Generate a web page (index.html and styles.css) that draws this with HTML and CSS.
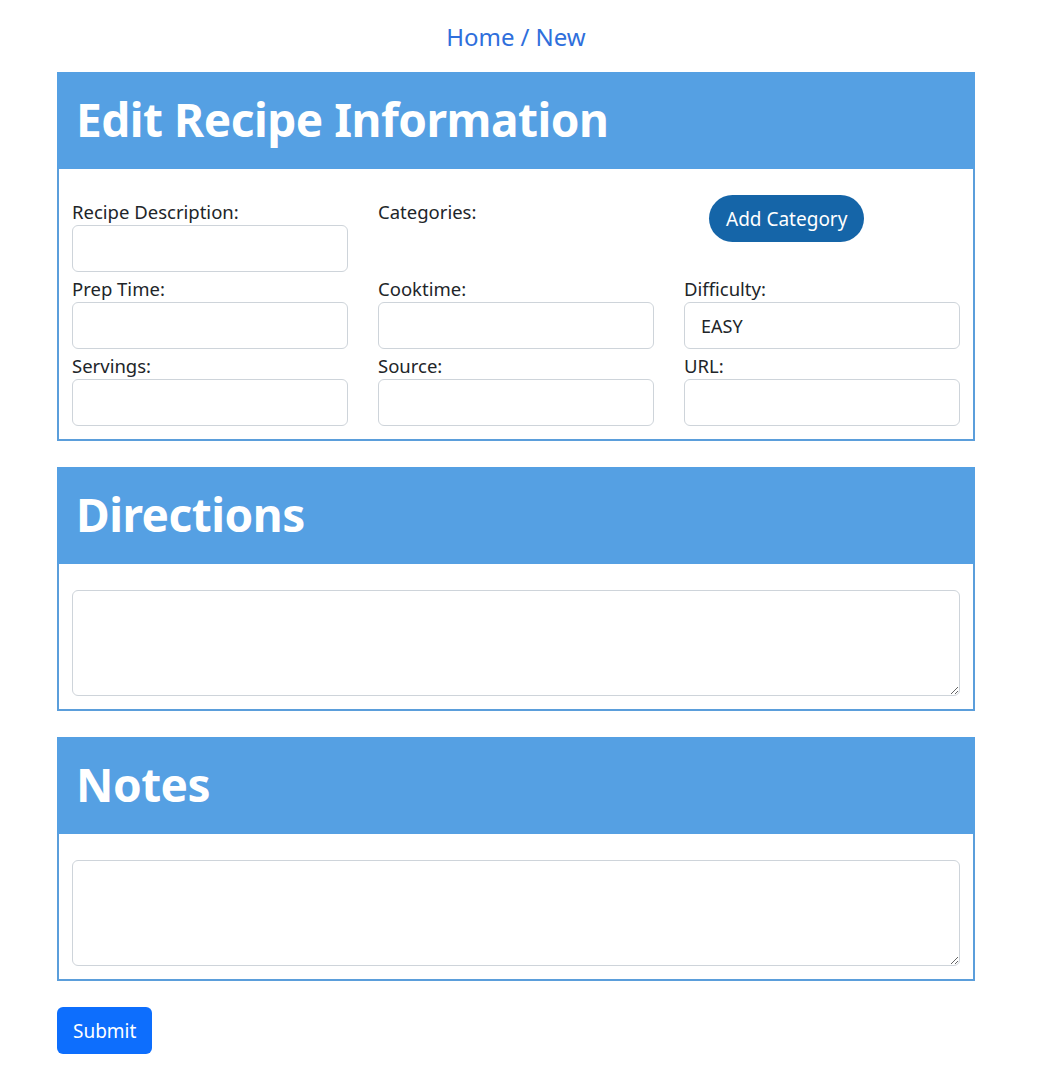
FILE: index.html
```html
<!DOCTYPE html>
<html lang="en">
<head>
<meta charset="utf-8">
<title>Edit Recipe</title>
<link rel="stylesheet" href="styles.css">
</head>
<body>
<div class="page">
  <nav class="crumbs"><a href="#">Home</a> / <a href="#">New</a></nav>

  <section class="card">
    <header class="card-head"><h1>Edit Recipe Information</h1></header>
    <div class="card-body grid">
      <div class="field">
        <label>Recipe Description:</label>
        <input class="box" type="text">
      </div>
      <div class="field">
        <label>Categories:</label>
      </div>
      <div class="field">
        <button class="pill" type="button">Add Category</button>
      </div>

      <div class="field">
        <label>Prep Time:</label>
        <input class="box" type="text">
      </div>
      <div class="field">
        <label>Cooktime:</label>
        <input class="box" type="text">
      </div>
      <div class="field">
        <label>Difficulty:</label>
        <input class="box" type="text" value="EASY">
      </div>

      <div class="field">
        <label>Servings:</label>
        <input class="box" type="text">
      </div>
      <div class="field">
        <label>Source:</label>
        <input class="box" type="text">
      </div>
      <div class="field">
        <label>URL:</label>
        <input class="box" type="text">
      </div>
    </div>
  </section>

  <section class="card">
    <header class="card-head"><h1>Directions</h1></header>
    <div class="card-body">
      <textarea class="area"></textarea>
    </div>
  </section>

  <section class="card">
    <header class="card-head"><h1>Notes</h1></header>
    <div class="card-body">
      <textarea class="area"></textarea>
    </div>
  </section>

  <button class="submit" type="submit">Submit</button>
</div>
</body>
</html>
```

FILE: styles.css
```css
* { box-sizing: border-box; }

html, body {
  margin: 0;
  padding: 0;
  background: #fff;
}

body {
  font-family: "Noto Sans", "Open Sans", sans-serif;
  color: #212529;
  font-size: 18px;
}

.page {
  width: 918px;
  margin-left: 57px;
  padding-bottom: 26px;
}

.crumbs {
  height: 72px;
  display: flex;
  justify-content: center;
  align-items: center;
  font-size: 24px;
  color: #2f6fdc;
}

.crumbs a {
  color: #2f6fdc;
  text-decoration: none;
  margin: 0 6px;
}

.card {
  border: 2px solid #5b9edb;
  margin-bottom: 26px;
}

.card-head {
  background: #55a0e3;
  height: 97px;
  margin: -2px -2px 0 -2px;
  display: flex;
  align-items: center;
  padding-left: 19px;
  padding-bottom: 4px;
}

.card-head h1 {
  margin: 0;
  color: #fff;
  font-weight: 700;
  font-size: 46px;
  line-height: 1;
  letter-spacing: -0.5px;
}

.card-body {
  padding: 26px 13px 13px 13px;
}

.grid {
  display: grid;
  grid-template-columns: repeat(3, 276px);
  column-gap: 30px;
}

.field {
  display: flex;
  flex-direction: column;
  height: 77px;
}

.field label {
  display: block;
  height: 30px;
  line-height: 30px;
  font-size: 18.5px;
  padding-top: 2px;
}

.box {
  height: 47px;
  width: 100%;
  border: 1px solid #ced4da;
  border-radius: 6px;
  font-family: inherit;
  font-size: 18px;
  color: #212529;
  padding: 0 16px;
  background: #fff;
}

.pill {
  align-self: flex-start;
  margin-left: 25px;
  height: 47px;
  padding: 0 17px;
  border: none;
  border-radius: 24px;
  background: #1565a8;
  color: #fff;
  font-family: inherit;
  font-size: 19px;
}

.area {
  display: block;
  width: 100%;
  height: 106px;
  border: 1px solid #ced4da;
  border-radius: 6px;
  font-family: inherit;
  font-size: 18px;
  resize: vertical;
  padding: 6px 12px;
}

.submit {
  height: 47px;
  padding: 0 16px;
  border: none;
  border-radius: 6px;
  background: #0d6efd;
  color: #fff;
  font-family: inherit;
  font-size: 19px;
}
```
